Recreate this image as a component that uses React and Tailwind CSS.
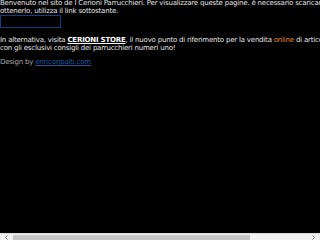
const Chevron = ({ dir }) => (
	<svg width="5" height="5" viewBox="0 0 5 5" className="text-[#7a7a7a]">
		<path
			d={dir === "left" ? "M3.5 0.5 L1.5 2.5 L3.5 4.5" : "M1.5 0.5 L3.5 2.5 L1.5 4.5"}
			fill="none"
			stroke="currentColor"
			strokeWidth="1"
		/>
	</svg>
);

export default function App() {
	return (
		<div className="relative h-screen overflow-hidden bg-black">
			<div
				className="w-[397px] text-[7px] leading-[7.5px] tracking-[-0.2px] text-[#e4e4e4]"
				style={{ fontFamily: '"DejaVu Sans", Verdana, sans-serif' }}
			>
				<p className="whitespace-nowrap">
					Benvenuto nel sito de I Cerioni Parrucchieri. Per visualizzare queste pagine. è necessario scaricare Flash Player. Per
				</p>
				<p className="whitespace-nowrap">ottenerlo, utilizza il link sottostante.</p>
				<div className="h-[13px] w-[61px] border border-[#0d3f7f]" />
				<div className="h-[9px]" />
				<p className="whitespace-nowrap">
					In alternativa, visita{" "}
					<a className="font-bold text-white underline">CERIONI STORE</a>, il nuovo punto di riferimento per la vendita{" "}
					<span className="text-[#e08a2c]">online</span> di articoli per capelli
				</p>
				<p className="whitespace-nowrap">con gli esclusivi consigli dei parrucchieri numeri uno!</p>
				<div className="h-[7px]" />
				<p className="whitespace-nowrap text-[#a8a8a8]">
					Design by <a className="text-[#1e5aa0] underline">enricoripalti.com</a>
				</p>
			</div>

			{/* horizontal scrollbar */}
			<div className="absolute inset-x-0 bottom-0 flex h-[7px] items-center border-t border-[#dcdcdc] bg-[#f1f1f1]">
				<div className="flex w-[13px] justify-center">
					<Chevron dir="left" />
				</div>
				<div className="h-[5px] w-[237px] bg-[#c6c6c6]" />
				<div className="flex-1" />
				<div className="flex w-[13px] justify-center">
					<Chevron dir="right" />
				</div>
			</div>
		</div>
	);
}
